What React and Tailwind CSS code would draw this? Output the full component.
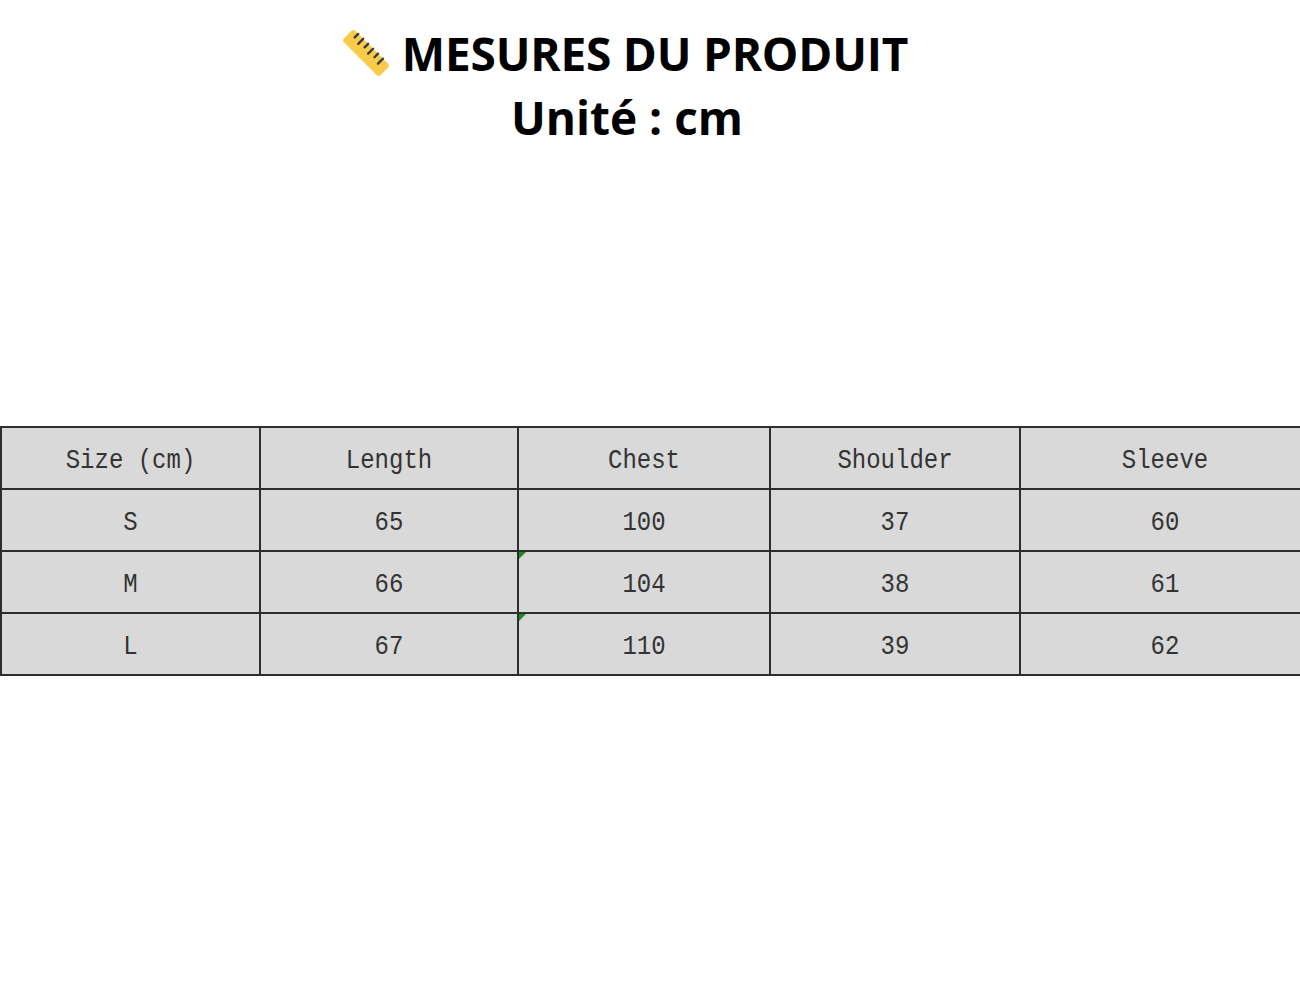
import React from "react";

const rows = [
  ["S", "65", "100", "37", "60"],
  ["M", "66", "104", "38", "61"],
  ["L", "67", "110", "39", "62"],
];

const headers = ["Size (cm)", "Length", "Chest", "Shoulder", "Sleeve"];
const widths = ["w-[259px]", "w-[258px]", "w-[252px]", "w-[250px]", "w-[290px]"];

const Ruler = () => (
  <svg width="48" height="48" viewBox="0 0 48 48" className="shrink-0">
    <g transform="rotate(45 24 24)">
      <rect x="-2" y="16" width="52" height="16" rx="3" fill="#F9CB4A" />
      <g stroke="#3b3b3b" strokeWidth="2.4" strokeLinecap="round">
        <line x1="5" y1="16" x2="5" y2="21" />
        <line x1="12" y1="16" x2="12" y2="23" />
        <line x1="19" y1="16" x2="19" y2="21" />
        <line x1="26" y1="16" x2="26" y2="23" />
        <line x1="33" y1="16" x2="33" y2="21" />
        <line x1="40" y1="16" x2="40" y2="23" />
      </g>
    </g>
  </svg>
);

const Cell = ({ children, w, mark }) => (
  <td
    className={`${w} relative h-[62px] border-2 border-[#2e2e2e] bg-[#d9d9d9] p-0 pt-[6px] text-center align-middle`}
  >
    {mark && (
      <span className="absolute left-0 top-0 h-0 w-0 border-r-[7px] border-t-[7px] border-r-transparent border-t-[#1f8a1f]" />
    )}
    <span className="inline-block scale-y-[1.12] text-[24px] leading-none text-[#333333] [font-family:'Liberation_Mono',monospace]">
      {children}
    </span>
  </td>
);

export default function App() {
  return (
    <div className="min-h-screen w-[1300px] overflow-hidden bg-white [font-family:'Open_Sans',sans-serif]">
      {/* Title */}
      <div className="flex flex-col items-center pt-[22px] pr-[46px]">
        <div className="flex items-center gap-[12px] pr-[4px]">
          <Ruler />
          <h1 className="text-[46px] font-bold leading-[62px] tracking-[-0.2px] text-black">
            MESURES DU PRODUIT
          </h1>
        </div>
        <p className="mt-[2px] text-[46px] font-bold leading-[62px] text-black">
          Unité : cm
        </p>
      </div>

      {/* Size table */}
      <div className="mt-[278px] overflow-hidden">
        <table className="w-[1309px] table-fixed border-collapse">
          <thead>
            <tr>
              {headers.map((h, i) => (
                <Cell key={h} w={widths[i]}>
                  {h}
                </Cell>
              ))}
            </tr>
          </thead>
          <tbody>
            {rows.map((r, ri) => (
              <tr key={r[0]}>
                {r.map((v, i) => (
                  <Cell key={i} w={widths[i]} mark={i === 2 && ri > 0}>
                    {v}
                  </Cell>
                ))}
              </tr>
            ))}
          </tbody>
        </table>
      </div>
    </div>
  );
}
